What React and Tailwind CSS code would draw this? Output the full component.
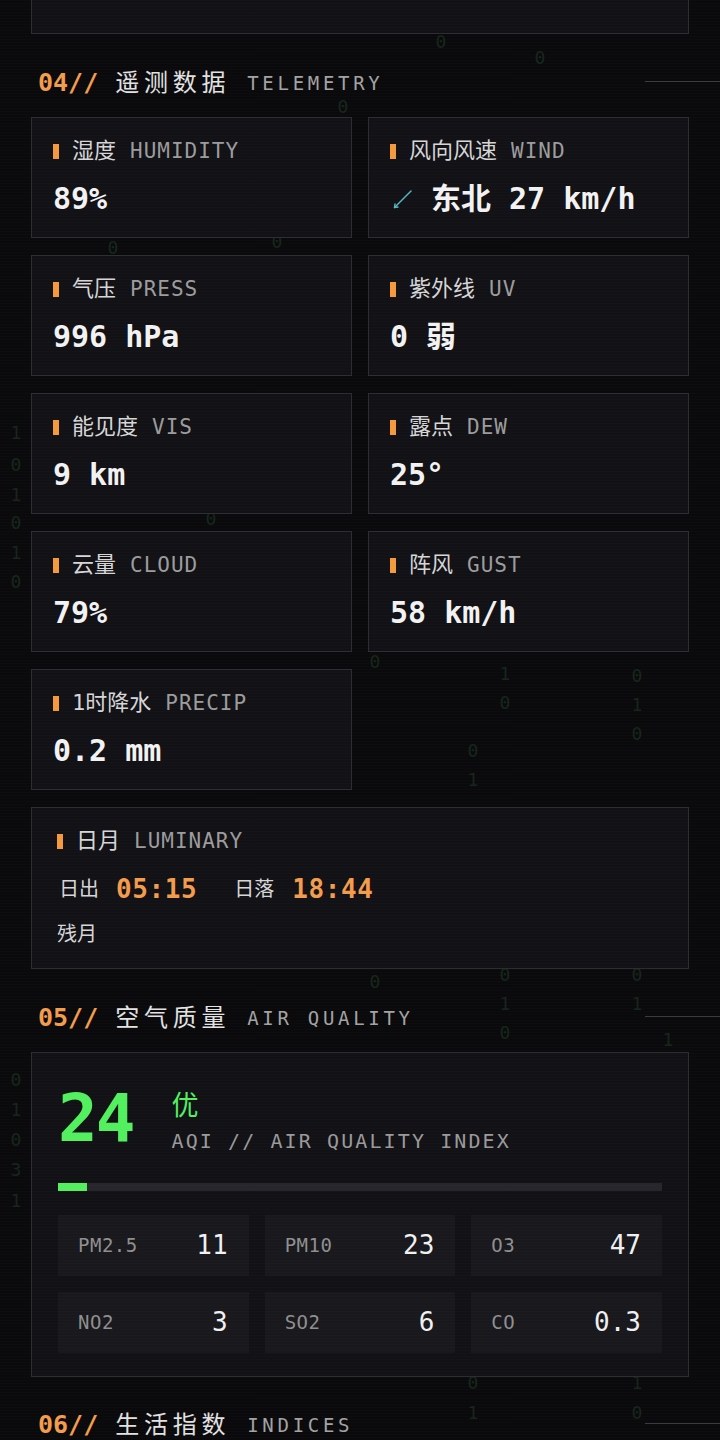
import React from "react";

const digits = [
  [441, 42, "0"], [540, 58, "0"], [343, 107, "0"], [113, 248, "0"], [277, 242, "0"],
  [16, 433, "1"], [16, 465, "0"], [16, 495, "1"], [16, 523, "0"], [16, 553, "1"], [16, 582, "0"],
  [211, 519, "0"], [375, 662, "0"], [505, 674, "1"], [505, 703, "0"],
  [637, 676, "0"], [637, 705, "1"], [637, 734, "0"], [473, 751, "0"], [473, 780, "1"],
  [375, 982, "0"], [505, 975, "0"], [505, 1004, "1"], [505, 1033, "0"],
  [637, 975, "0"], [637, 1004, "1"], [668, 1040, "1"],
  [16, 1080, "0"], [16, 1110, "1"], [16, 1140, "0"], [16, 1170, "3"], [16, 1201, "1"],
  [473, 1383, "0"], [473, 1413, "1"], [637, 1383, "1"], [637, 1413, "0"],
];

function Label({ zh, en }) {
  return (
    <div className="flex h-[28px] items-center">
      <span className="mr-[13px] h-[15px] w-[6px] bg-[#f59a3c]" />
      <span className="text-[22px] leading-[28px] text-[#d6d6d6]">{zh}</span>
      <span className="ml-[14px] text-[21px] leading-[28px] tracking-[1px] text-[#9c9c9c]">{en}</span>
    </div>
  );
}

function Card({ zh, en, children }) {
  return (
    <div className="relative z-10 h-[121px] border border-[#2c2c33] bg-[#111116] pl-[21px] pt-[19px]">
      <Label zh={zh} en={en} />
      <div className="mt-[16px] flex h-[36px] items-center text-[30px] font-bold leading-[36px] text-[#f2f2f2]">
        {children}
      </div>
    </div>
  );
}

function Heading({ num, zh, en, className }) {
  return (
    <div className={"relative z-10 flex h-[32px] items-center pl-[7px] " + className}>
      <span className="text-[25px] font-bold leading-[32px] text-[#f39c4c]">{num}//</span>
      <span className="ml-[17px] text-[24px] leading-[32px] tracking-[4.75px] text-[#e2e2e2]">{zh}</span>
      <span className="ml-[17px] text-[19px] leading-[32px] tracking-[3.7px] text-[#a3a3a3]">{en}</span>
      <span className="ml-auto mr-[-31px] mt-[-4px] h-px w-[75px] bg-[#3a3a40]" />
    </div>
  );
}

function Cell({ k, v }) {
  return (
    <div className="flex h-[61px] items-center justify-between bg-[#18181d] pl-[20px] pr-[21px]">
      <span className="text-[19px] tracking-[0.5px] text-[#8f8f8f]">{k}</span>
      <span className="text-[26px] text-[#f0f0f0]">{v}</span>
    </div>
  );
}

export default function App() {
  return (
    <div className="relative min-h-[1440px] w-[720px] overflow-hidden bg-[#0a0a0c] px-[31px] font-['DejaVu_Sans_Mono','Noto_Sans_CJK_SC',monospace]">
      <div className="pointer-events-none absolute inset-0">
        {digits.map(([x, y, d], i) => (
          <span
            key={i}
            className="absolute -translate-x-1/2 -translate-y-1/2 text-[18px] leading-none text-[#16261a]"
            style={{ left: x, top: y }}
          >
            {d}
          </span>
        ))}
      </div>

      <div className="relative z-10 h-[34px] border-x border-b border-[#2c2c33] bg-[#111116]" />

      <Heading num="04" zh="遥测数据" en="TELEMETRY" className="mt-[33px]" />

      <div className="mt-[18px] grid grid-cols-2 gap-x-[16px] gap-y-[17px]">
        <Card zh="湿度" en="HUMIDITY">89%</Card>
        <Card zh="风向风速" en="WIND">
          <svg width="24" height="24" viewBox="0 0 24 24" className="mr-[17px]" fill="none" stroke="#56b8c4" strokeWidth="1.4" strokeLinecap="round">
            <path d="M21 4 L4.5 20.5" />
            <path d="M4.5 20.5 L5 17 M4.5 20.5 L8 20" />
          </svg>
          <span>东北 27 km/h</span>
        </Card>
        <Card zh="气压" en="PRESS">996 hPa</Card>
        <Card zh="紫外线" en="UV">0 弱</Card>
        <Card zh="能见度" en="VIS">9 km</Card>
        <Card zh="露点" en="DEW">25°</Card>
        <Card zh="云量" en="CLOUD">79%</Card>
        <Card zh="阵风" en="GUST">58 km/h</Card>
        <Card zh="1时降水" en="PRECIP">0.2 mm</Card>
      </div>

      <div className="relative z-10 mt-[17px] h-[162px] border border-[#2c2c33] bg-[#111116] pl-[25px] pt-[19px]">
        <Label zh="日月" en="LUMINARY" />
        <div className="ml-[2px] mt-[18px] flex h-[32px] items-center">
          <span className="text-[20px] text-[#d6d6d6]">日出</span>
          <span className="ml-[17px] text-[26px] font-bold tracking-[0.6px] text-[#f39c4c]">05:15</span>
          <span className="ml-[37px] text-[20px] text-[#d6d6d6]">日落</span>
          <span className="ml-[18px] text-[26px] font-bold tracking-[0.6px] text-[#f39c4c]">18:44</span>
        </div>
        <div className="mt-[15px] h-[28px] text-[20px] leading-[28px] text-[#d6d6d6]">残月</div>
      </div>

      <Heading num="05" zh="空气质量" en="AIR QUALITY" className="mt-[33px]" />

      <div className="relative z-10 mt-[18px] h-[325px] border border-[#2c2c33] bg-[#111116] px-[26px] pt-[33px]">
        <div className="flex h-[66px] items-start">
          <span className="text-[66px] font-bold leading-[66px] tracking-[-2px] text-[#52f05e]">24</span>
          <div className="ml-[38px] mt-[4px]">
            <div className="text-[27px] leading-[32px] text-[#52f05e]">优</div>
            <div className="mt-[6px] text-[20px] leading-[26px] tracking-[2.1px] text-[#9a9a9a]">AQI // AIR QUALITY INDEX</div>
          </div>
        </div>
        <div className="mt-[31px] h-[8px] bg-[#26262c]">
          <div className="h-full w-[29px] bg-[#52f05e]" />
        </div>
        <div className="mt-[24px] grid grid-cols-3 gap-[16px]">
          <Cell k="PM2.5" v="11" />
          <Cell k="PM10" v="23" />
          <Cell k="O3" v="47" />
          <Cell k="NO2" v="3" />
          <Cell k="SO2" v="6" />
          <Cell k="CO" v="0.3" />
        </div>
      </div>

      <Heading num="06" zh="生活指数" en="INDICES" className="mt-[32px]" />

      <div className="pointer-events-none absolute inset-0 z-20 bg-[repeating-linear-gradient(to_bottom,rgba(255,255,255,0.012)_0px,rgba(255,255,255,0.012)_1px,transparent_1px,transparent_3px)]" />
    </div>
  );
}
